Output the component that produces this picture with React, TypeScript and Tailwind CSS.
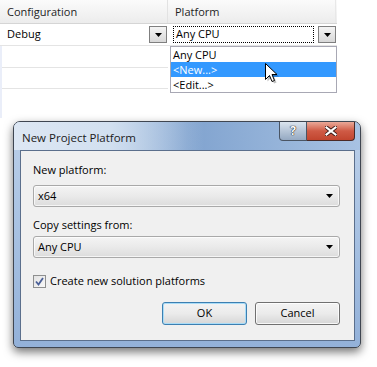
import React from "react";

function Arrow() {
  return (
    <svg width="7" height="4" viewBox="0 0 7 4">
      <path d="M0 0H7L3.5 4Z" fill="#000" />
    </svg>
  );
}

function GridButton() {
  return (
    <div className="w-[18px] h-[17px] border border-[#7f7f7f] bg-gradient-to-b from-[#f4f4f4] to-[#d8d8d8] flex items-center justify-center">
      <Arrow />
    </div>
  );
}

function Select({ value }: { value: string }) {
  return (
    <div className="h-[22px] rounded-[3px] border border-[#a9a9a9] bg-gradient-to-b from-[#f4f4f4] via-[#eaeaea] to-[#dcdcdc] flex items-center pl-[4px] pr-[6px] shadow-[inset_0_0_0_1px_rgba(255,255,255,0.7)]">
      <span className="flex-1 text-[11px] text-black">{value}</span>
      <Arrow />
    </div>
  );
}

function Button({ label, primary }: { label: string; primary?: boolean }) {
  return (
    <div
      className={
        "w-[85px] h-[23px] rounded-[3px] border flex items-center justify-center text-[11px] text-black bg-gradient-to-b from-[#f3f3f3] via-[#ebebeb] to-[#d6d6d6] " +
        (primary
          ? "border-[#3c7fb1] shadow-[inset_0_0_0_1px_#a9dcf7]"
          : "border-[#707070] shadow-[inset_0_0_0_1px_rgba(255,255,255,0.8)]")
      }
    >
      {label}
    </div>
  );
}

export default function App() {
  return (
    <div className="relative w-[377px] h-[367px] bg-white overflow-hidden font-['Open_Sans','Noto_Sans',sans-serif] text-[11px] text-black">
      {/* grid */}
      <div className="w-[337px]">
        <div className="flex h-[24px] border-b border-[#d5d5d5] bg-gradient-to-b from-[#fbfbfb] to-[#ececec]">
          <div className="w-[168px] border-r border-[#e2e2e2] pl-[7px] pt-[4px] text-[#1e1e1e]">Configuration</div>
          <div className="w-[168px] border-r border-[#e8e8e8] pl-[7px] pt-[4px] text-[#1e1e1e]">Platform</div>
        </div>
        <div className="flex h-[22px] border-b border-[#e4e4e4]">
          <div className="w-[168px] flex items-center pl-[7px] pr-[1px]">
            <span className="flex-1">Debug</span>
            <GridButton />
          </div>
          <div className="w-[168px] flex items-center pl-[5px]">
            <div className="w-[141px] h-[17px] border border-dotted border-black flex items-center pl-[2px]">Any CPU</div>
            <div className="ml-[4px]"><GridButton /></div>
          </div>
        </div>
        <div className="h-[22px] w-[168px] border-b border-[#e4e4e4]" />
        <div className="h-[21px] w-[168px] border-b border-[#e4e4e4]" />
      </div>
      <div className="absolute left-0 top-[46px] w-[2px] h-[72px] bg-[#eaeef9]" />

      {/* dropdown list */}
      <div className="absolute left-[170px] top-[46px] w-[167px] h-[47px] border border-[#a8a8b4] bg-white flex flex-col">
        <div className="h-[15px] pl-[2px] leading-[15px]">Any CPU</div>
        <div className="h-[15px] pl-[2px] leading-[15px] bg-[#3399ff] text-white">&lt;New...&gt;</div>
        <div className="h-[15px] pl-[2px] leading-[15px]">&lt;Edit...&gt;</div>
      </div>

      {/* cursor */}
      <svg className="absolute left-[265px] top-[63px]" width="15" height="22" viewBox="0 0 15 22">
        <path d="M2.5 2.5 L2.5 18.5 L6.5 14.5 L9 20.5 L11.5 19.5 L9 13.5 L14 13.5 Z" fill="rgba(0,0,0,0.25)" />
        <path d="M0.5 0.5 L0.5 16.5 L4.5 12.5 L7 18.5 L9.5 17.5 L7 11.5 L12 11.5 Z" fill="#fff" stroke="#000" strokeWidth="1" strokeLinejoin="miter" />
      </svg>

      {/* dialog */}
      <div className="ml-[13px] mt-[32px] w-[348px] h-[227px] rounded-t-[7px] rounded-b-[5px] border border-[#3f4651] shadow-[0_4px_10px_rgba(0,0,0,0.55)] bg-gradient-to-b from-[#bcd0e9] via-[#a7c1e2] to-[#93b1d9] relative flex flex-col pl-[6px] pr-[5px] pb-[6px]">
        <div className="absolute inset-x-0 top-0 h-[28px] rounded-t-[6px] bg-gradient-to-r from-[#c2d4ea] via-[#7a9ecc] to-[#a6c1e2] opacity-90" />
        <div className="absolute left-0 top-0 w-[190px] h-[28px] rounded-tl-[6px] bg-gradient-to-r from-[#dde7f3] via-[#d2e0f0] to-transparent" />
        {/* title */}
        <div className="relative h-[28px] flex items-start">
          <div className="pl-[2px] pt-[7px] text-[11.5px] text-[#1b1b1b]">New Project Platform</div>
          <div className="ml-auto flex">
            <div className="w-[28px] h-[19px] rounded-bl-[4px] border border-t-0 border-[#4a5564] bg-gradient-to-b from-[#dbe4ee] via-[#b6c5d7] to-[#95a9c2] flex items-center justify-center">
              <span className="text-[12px] font-bold text-white leading-none [text-shadow:0_0_1px_#000,0_0_1px_#000]">?</span>
            </div>
            <div className="w-[48px] h-[19px] rounded-br-[4px] border border-t-0 border-l-0 border-[#4a2a26] bg-gradient-to-b from-[#e9a898] via-[#cf5a45] to-[#c1452f] flex items-center justify-center">
              <svg width="12" height="10" viewBox="0 0 12 10">
                <path d="M1.5 1.5 L10.5 8.5 M10.5 1.5 L1.5 8.5" stroke="#3b1a16" strokeWidth="4" strokeLinecap="square" />
                <path d="M1.5 1.5 L10.5 8.5 M10.5 1.5 L1.5 8.5" stroke="#fff" strokeWidth="2.2" strokeLinecap="square" />
              </svg>
            </div>
          </div>
        </div>
        {/* client */}
        <div className="relative flex-1 border border-[#5b6f8c] bg-[#f0f0f0] pl-[12px] pr-[14px] pt-[11px]">
          <div className="h-[16px] leading-[16px]">New platform:</div>
          <div className="mt-[7px]"><Select value="x64" /></div>
          <div className="mt-[10px] h-[16px] leading-[16px]">Copy settings from:</div>
          <div className="mt-[3px]"><Select value="Any CPU" /></div>
          <div className="mt-[17px] flex items-center h-[13px]">
            <div className="w-[13px] h-[13px] border border-[#8e8f8f] bg-gradient-to-br from-[#e3e3e3] to-[#f8f8f8] flex items-center justify-center">
              <svg width="9" height="9" viewBox="0 0 9 9">
                <path d="M1 4.5 L3.5 7.5 L8 1" stroke="#4a5f97" strokeWidth="1.8" fill="none" />
              </svg>
            </div>
            <span className="ml-[4px]">Create new solution platforms</span>
          </div>
          <div className="mt-[14px] flex justify-end gap-[8px]">
            <Button label="OK" primary />
            <Button label="Cancel" />
          </div>
        </div>
      </div>
    </div>
  );
}
